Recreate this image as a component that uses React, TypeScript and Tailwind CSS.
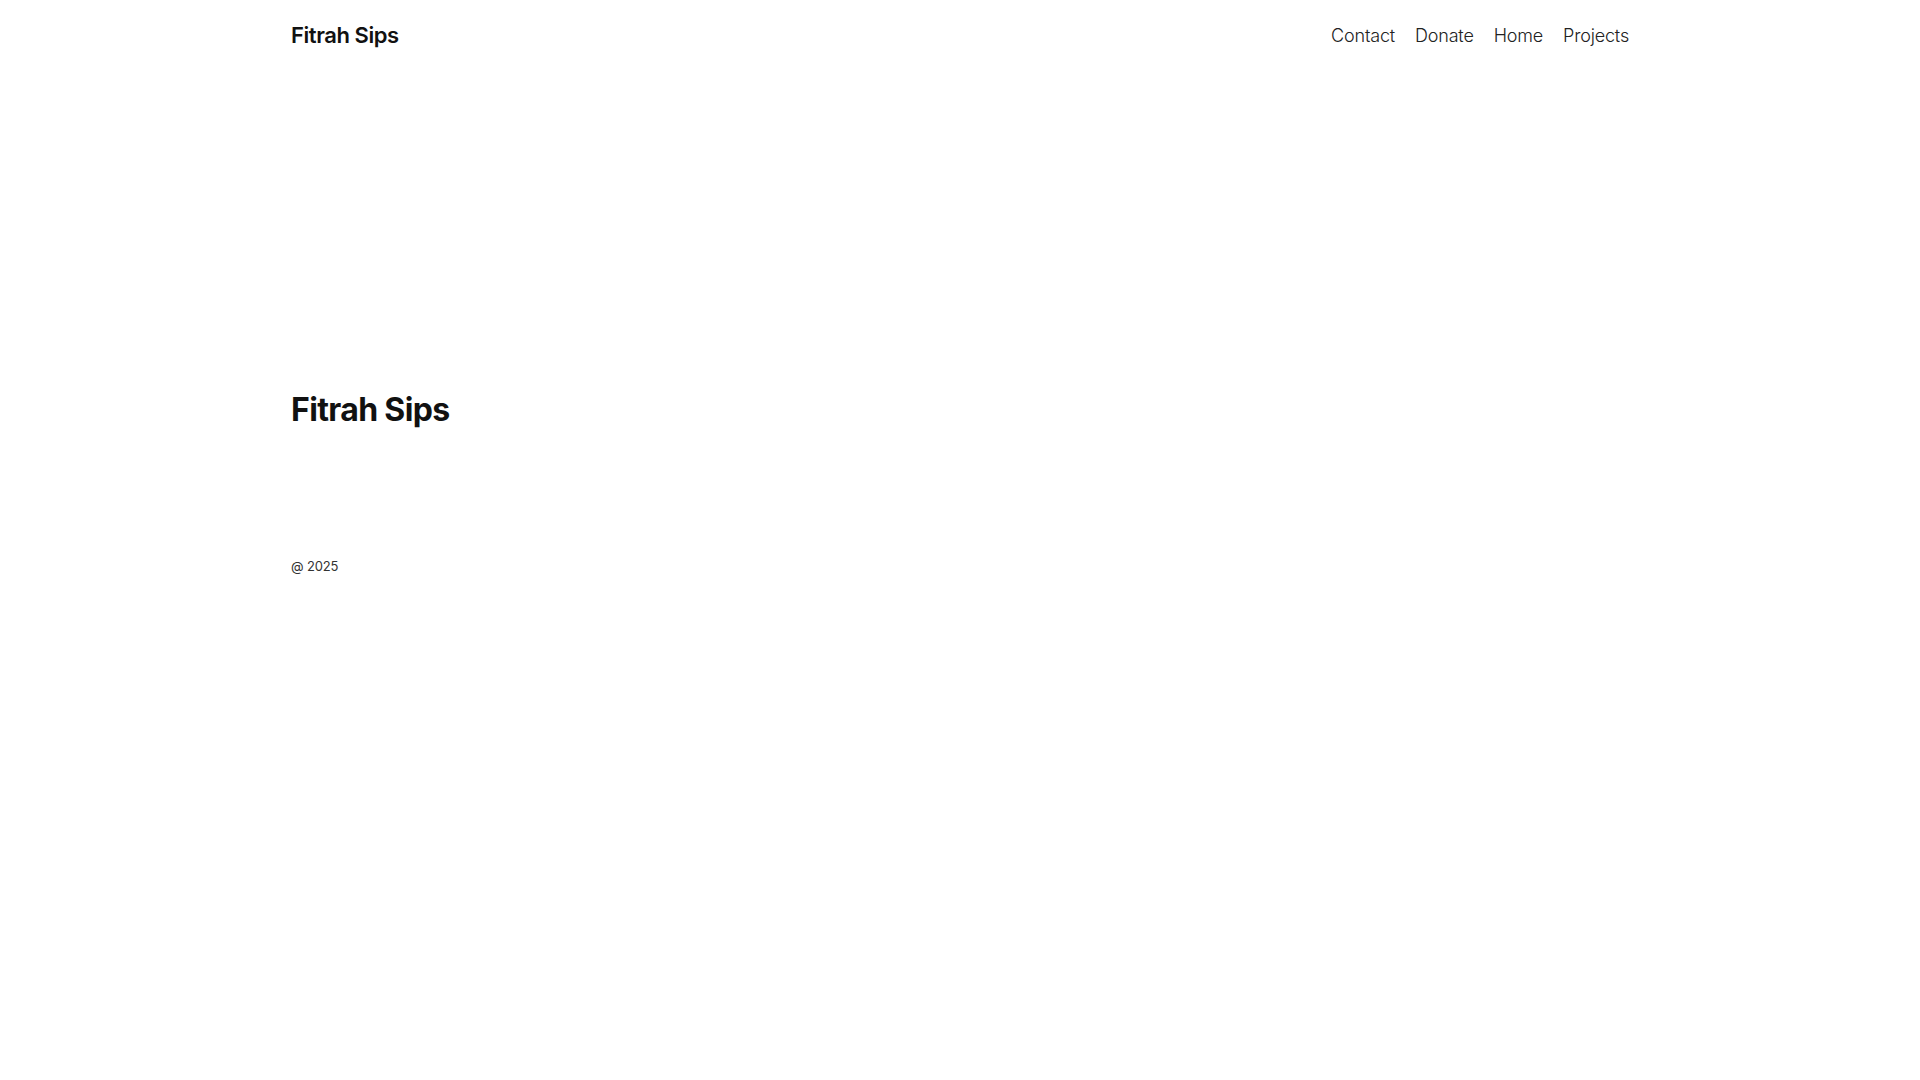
const navLinks = ['Contact', 'Donate', 'Home', 'Projects']

export default function App() {
  return (
    <div className="min-h-screen bg-white text-[#111111]" style={{ fontFamily: 'Inter, "Noto Sans", sans-serif' }}>
      <div className="mx-auto w-[1338px]">
        <header className="flex h-[70px] items-center justify-between">
          <a href="#" className="text-[22px] font-semibold tracking-[-0.02em] text-[#111111]">
            Fitrah Sips
          </a>
          <nav className="flex items-center gap-[20px]">
            {navLinks.map((label) => (
              <a key={label} href="#" className="text-[18px] font-light tracking-[-0.01em] text-[#222222]">
                {label}
              </a>
            ))}
          </nav>
        </header>

        <main className="pt-[321px]">
          <h1 className="text-[32px] leading-[38px] font-bold tracking-[-0.02em]">Fitrah Sips</h1>
        </main>

        <footer className="pt-[127px]">
          <p className="text-[13px] leading-[20px] text-[#333333] tracking-[-0.01em]">@ 2025</p>
        </footer>
      </div>
    </div>
  )
}
